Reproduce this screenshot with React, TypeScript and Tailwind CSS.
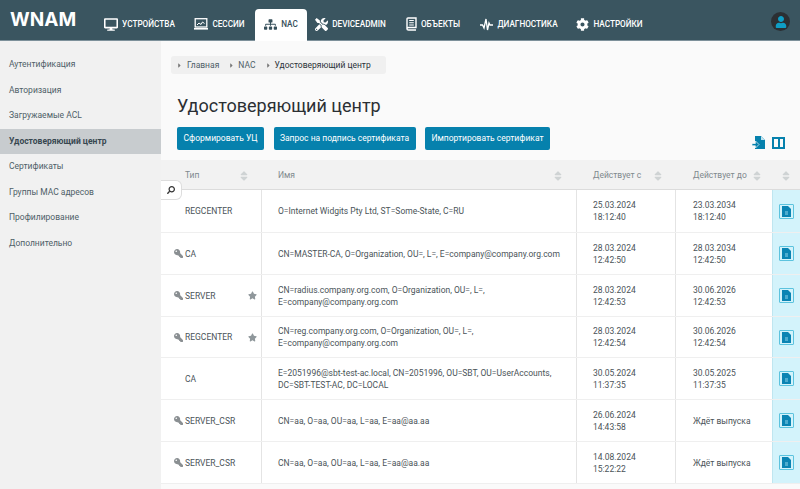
import React from "react";
import { FaDesktop, FaSitemap, FaTools, FaCog, FaKey, FaStar, FaUser, FaSearch, FaCaretRight, FaSortUp, FaSortDown } from "react-icons/fa";

const font = { fontFamily: "Roboto, sans-serif" };

const SessionsIcon = () => (
  <svg width="14" height="12" viewBox="0 0 14 12" fill="none" stroke="white">
    <rect x="1.2" y="0.700" width="11.600" height="8.300" strokeWidth="1.300" />
    <path d="M3 7l2-2 2 1.500 1.500-2.500 2 1.500" strokeWidth="1" />
    <path d="M0 10.800h14" strokeWidth="1.600" />
  </svg>
);

const ObjectsIcon = () => (
  <svg width="11" height="14" viewBox="0 0 11 14" fill="none" stroke="white">
    <path d="M1 12V1.800Q1 1 2 1h8v9.500H2.500Q1 10.500 1 12q0 1 1.500 1H10" strokeWidth="1.400" />
    <path d="M3.200 3.500h4.600M3.200 5.700h4.600M3.200 8h4.600" strokeWidth="1.100" />
  </svg>
);

const PulseIcon = () => (
  <svg width="13" height="13" viewBox="0 0 13 13" className="w-[13px] h-[13px]" fill="none" stroke="white" strokeWidth="1.300">
    <path d="M0 7h2.500l1.500 3 2-9 1.500 11 1.500-7 1 2h3" />
  </svg>
);

const ImportIcon = () => (
  <svg width="13" height="13" viewBox="0 0 13 13">
    <path d="M3 0h6l4 4v9H3z" fill="#0681ad" />
    <path d="M9 0v4h4" fill="#bfe3ef" />
    <path d="M0 7.500h3.500V5l3.500 3.500L3.500 12V9.800H0z" fill="#0681ad" stroke="#fafafa" strokeWidth="0.700" />
  </svg>
);

const DocButton = () => (
  <div className="w-[15px] h-[15px] border border-[#5cc3de] rounded-[1px] flex items-center justify-center">
    <svg width="9" height="11" viewBox="0 0 9 11">
      <path d="M0 0h6l3 3v8H0z" fill="#0b84b3" />
      <path d="M3 6h3M3 8h3" stroke="#8fd3ea" strokeWidth="1" />
    </svg>
  </div>
);

const SortIcon = () => (
  <span className="relative w-[8px] h-[12px] inline-block text-[#cfd3d4]">
    <FaSortUp className="absolute left-0 top-0 w-[8px] h-[12px]" />
    <FaSortDown className="absolute left-0 top-0 w-[8px] h-[12px]" />
  </span>
);

const tabs = [
  { label: "УСТРОЙСТВА", icon: <FaDesktop className="w-[14px] h-[13px]" />, width: "w-[89px]" },
  { label: "СЕССИИ", icon: <SessionsIcon />, width: "w-[71px]" },
  { label: "NAC", icon: <FaSitemap className="w-[13px] h-[13px] text-[#37505b]" />, width: "w-[52px]", active: true },
  { label: "DEVICEADMIN", icon: <FaTools className="w-[13px] h-[13px]" />, width: "w-[87px]" },
  { label: "ОБЪЕКТЫ", icon: <ObjectsIcon />, width: "w-[78px]" },
  { label: "ДИАГНОСТИКА", icon: <PulseIcon />, width: "w-[94px]" },
  { label: "НАСТРОЙКИ", icon: <FaCog className="w-[13px] h-[13px]" />, width: "w-[87px]" },
];

const sideItems = [
  "Аутентификация",
  "Авторизация",
  "Загружаемые ACL",
  "Удостоверяющий центр",
  "Сертификаты",
  "Группы MAC адресов",
  "Профилирование",
  "Дополнительно",
];

type Row = {
  type: string;
  name: string[];
  from: string[];
  to: string[];
  key?: boolean;
  star?: boolean;
  height: string;
};

const rows: Row[] = [
  { type: "REGCENTER", name: ["O=Internet Widgits Pty Ltd, ST=Some-State, C=RU"], from: ["25.03.2024", "18:12:40"], to: ["23.03.2034", "18:12:40"], height: "h-[43px]" },
  { type: "CA", key: true, name: ["CN=MASTER-CA, O=Organization, OU=, L=, E=company@company.org.com"], from: ["28.03.2024", "12:42:50"], to: ["28.03.2034", "12:42:50"], height: "h-[42px]" },
  { type: "SERVER", key: true, star: true, name: ["CN=radius.company.org.com, O=Organization, OU=, L=,", "E=company@company.org.com"], from: ["28.03.2024", "12:42:53"], to: ["30.06.2026", "12:42:53"], height: "h-[42px]" },
  { type: "REGCENTER", key: true, star: true, name: ["CN=reg.company.org.com, O=Organization, OU=, L=,", "E=company@company.org.com"], from: ["28.03.2024", "12:42:54"], to: ["30.06.2026", "12:42:54"], height: "h-[41px]" },
  { type: "CA", name: ["E=2051996@sbt-test-ac.local, CN=2051996, OU=SBT, OU=UserAccounts,", "DC=SBT-TEST-AC, DC=LOCAL"], from: ["30.05.2024", "11:37:35"], to: ["30.05.2025", "11:37:35"], height: "h-[42px]" },
  { type: "SERVER_CSR", key: true, name: ["CN=aa, O=aa, OU=aa, L=aa, E=aa@aa.aa"], from: ["26.06.2024", "14:43:58"], to: ["Ждёт выпуска"], height: "h-[42px]" },
  { type: "SERVER_CSR", key: true, name: ["CN=aa, O=aa, OU=aa, L=aa, E=aa@aa.aa"], from: ["14.08.2024", "15:22:22"], to: ["Ждёт выпуска"], height: "h-[42px]" },
];

export default function App() {
  return (
    <div className="w-[800px] h-[489px] overflow-hidden flex flex-col bg-[#fafafa]" style={font}>
      {/* Top bar */}
      <header className="h-[41px] shrink-0 bg-[#3a5560] border-b border-[#7d909a] flex items-end relative">
        <div className="w-[95px] h-[40px] pl-[10px] pt-[9px] text-[19px] leading-[22px] font-bold text-white" style={{ fontFamily: "Inter, sans-serif" }}>
          WNAM
        </div>
        <nav className="flex items-end h-[40px]">
          {tabs.map((t) => (
            <div
              key={t.label}
              className={`${t.width} flex items-center justify-center gap-[4px] text-[8.2px] font-medium pb-[1px] ${
                t.active ? "bg-white text-[#37505b] rounded-t-[4px] h-[32px] -mb-[1px]" : "h-[31px] text-white"
              }`}
            >
              {t.icon}
              <span>{t.label}</span>
            </div>
          ))}
        </nav>
        <div className="absolute right-[10px] top-[12px] w-[19px] h-[19px] rounded-full bg-[#2b2f33] flex items-center justify-center overflow-hidden">
          <FaUser className="w-[12px] h-[12px] text-[#0f9dc4]" />
        </div>
      </header>

      <div className="flex flex-1 min-h-0">
        {/* Sidebar */}
        <aside className="w-[161px] shrink-0 bg-[#f1f1f1] pt-[11px]">
          {sideItems.map((s) => (
            <div
              key={s}
              className={`h-[25.500px] pl-[9px] flex items-center text-[8.5px] ${
                s === "Удостоверяющий центр" ? "bg-[#c8cccf] font-bold text-[#37474f]" : "text-[#4f5f68]"
              }`}
            >
              {s}
            </div>
          ))}
        </aside>

        {/* Main */}
        <main className="flex-1 min-w-0 flex flex-col">
          <div className="pl-[10px] pt-[15px]">
            <div className="w-[215px] h-[18px] rounded-[3px] bg-[#f0f0f0] flex items-center pl-[6px] text-[8.5px] text-[#4f5f68]">
              <FaCaretRight className="w-[5px] h-[7px] text-[#777]" />
              <span className="ml-[5px]">Главная</span>
              <FaCaretRight className="w-[5px] h-[7px] text-[#777] ml-[10px]" />
              <span className="ml-[4px]">NAC</span>
              <FaCaretRight className="w-[5px] h-[7px] text-[#777] ml-[10px]" />
              <span className="ml-[4px] text-[#2c3338]">Удостоверяющий центр</span>
            </div>
          </div>
          <h1 className="pl-[16px] mt-[18px] h-[28px] text-[18px] leading-[28px] text-[#2b2f33]">Удостоверяющий центр</h1>
          <div className="flex items-center pl-[16px] mt-[7px] h-[23px] gap-[9.500px]">
            <button className="w-[87px] h-[23px] bg-[#0681ad] rounded-[2px] text-white text-[8.5px]">Сформировать УЦ</button>
            <button className="w-[142px] h-[23px] bg-[#0681ad] rounded-[2px] text-white text-[8.5px]">Запрос на подпись сертификата</button>
            <button className="w-[125px] h-[23px] bg-[#0681ad] rounded-[2px] text-white text-[8.5px]">Импортировать сертификат</button>
            <div className="ml-auto mr-[15px] mt-[8px] flex items-center gap-[7px]">
              <ImportIcon />
              <div className="w-[13px] h-[12px] border-2 border-[#0681ad] flex justify-center">
                <div className="w-[2px] h-full bg-[#0681ad]" />
              </div>
            </div>
          </div>

          {/* Table */}
          <div className="mt-[10px] relative">
            <div className="h-[30px] flex bg-[#f2f2f2] border-b border-[#dcdcdc] text-[8.5px] text-[#80898e]">
              <div className="w-[101px] pl-[24px] pr-[14px] pt-[2px] flex items-center justify-between"><span>Тип</span><SortIcon /></div>
              <div className="w-[315px] pl-[16px] pr-[15px] pt-[2px] flex items-center justify-between"><span>Имя</span><SortIcon /></div>
              <div className="w-[99px] pl-[16px] pr-[14px] pt-[2px] flex items-center justify-between"><span>Действует с</span><SortIcon /></div>
              <div className="w-[96px] pl-[17px] pr-[11px] pt-[2px] flex items-center justify-between"><span>Действует до</span><SortIcon /></div>
              <div className="w-[28px] pr-[10px] pt-[2px] flex items-center justify-end"><SortIcon /></div>
            </div>
            <div className="absolute left-0 top-[20px] w-[21px] h-[20px] bg-white border border-[#dddddd] border-l-0 rounded-r-[6px] flex items-center justify-center">
              <FaSearch className="w-[8px] h-[8px] text-[#333] -scale-x-100" />
            </div>
            {rows.map((r, i) => (
              <div key={i} className={`${r.height} flex bg-white border-b border-[#efefef] text-[8.5px] leading-[12px] text-[#4a5358]`}>
                <div className="w-[101px] border-r border-[#e4e4e4] pl-[13px] flex items-center relative">
                  <span className="w-[11px]">{r.key && <FaKey className="w-[9px] h-[9px] text-[#8a8f92] -scale-x-100" />}</span>
                  <span>{r.type}</span>
                  {r.star && <FaStar className="absolute right-[4px] w-[9px] h-[9px] text-[#8f979b]" />}
                </div>
                <div className="w-[315px] border-r border-[#e4e4e4] pl-[16px] flex flex-col justify-center">
                  {r.name.map((n) => <span key={n}>{n}</span>)}
                </div>
                <div className="w-[99px] border-r border-[#e4e4e4] pl-[16px] flex flex-col justify-center">
                  {r.from.map((n) => <span key={n}>{n}</span>)}
                </div>
                <div className="w-[96px] pl-[17px] flex flex-col justify-center">
                  {r.to.map((n) => <span key={n}>{n}</span>)}
                </div>
                <div className="w-[28px] bg-[#d3f3fb] border-l border-[#bfe6f0] flex items-center justify-center">
                  <DocButton />
                </div>
              </div>
            ))}
          </div>
        </main>
      </div>
    </div>
  );
}
